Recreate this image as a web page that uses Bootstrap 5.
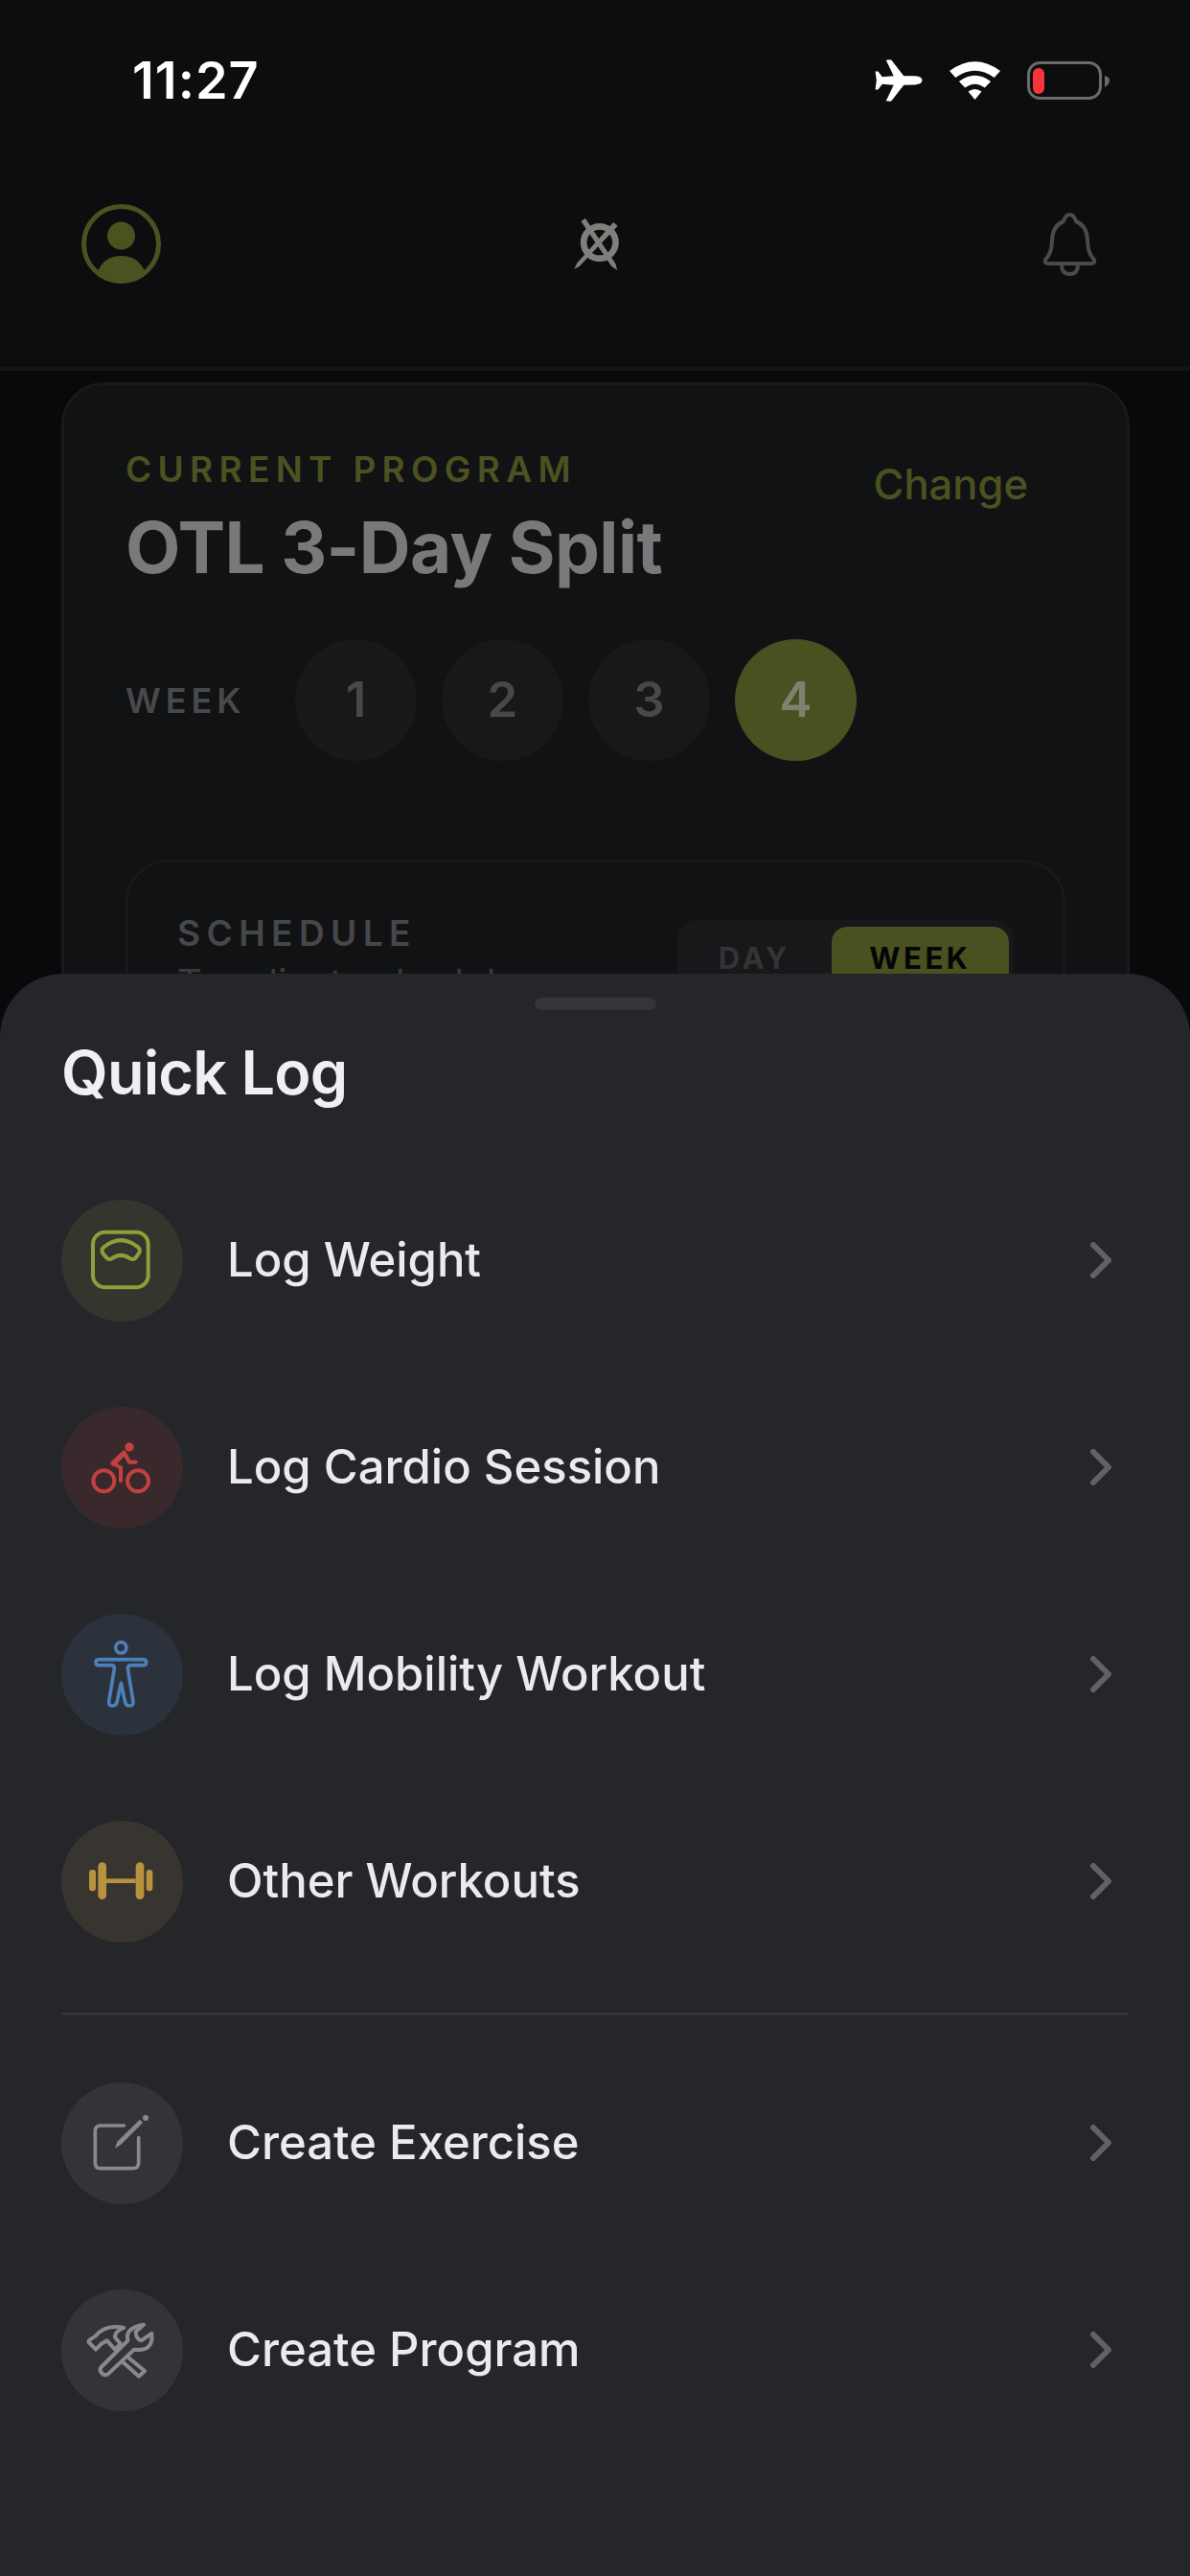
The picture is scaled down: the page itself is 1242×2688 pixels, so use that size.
<!DOCTYPE html>
<html lang="en">
<head>
  <meta charset="UTF-8">
  <meta name="viewport" content="width=device-width, initial-scale=1.0">
  <title>Quick Log</title>
  <link href="https://cdn.jsdelivr.net/npm/bootstrap@5.3.3/dist/css/bootstrap.min.css" rel="stylesheet">
  <style>
    body {
      background: #08090a;
      font-family: Inter, "Liberation Sans", sans-serif;
    }
    .screen {
      width: 1242px;
      height: 2688px;
      overflow: hidden;
      position: relative;
      background: #08090a;
    }
    .top-area { background: #0c0d0f; }
    .status-row { height: 130px; padding: 52px 84px 0 138px; }
    .status-time { font-size: 54px; line-height: 64px; font-weight: 600; color: #fff; letter-spacing: 1px; }
    .status-air { margin: 10px 28px 0 0; }
    .status-wifi { margin: 10px 28px 0 0; }
    .status-batt { margin-top: 10px; }
    .app-head { height: 257px; padding: 83px 99px 0 85px; border-bottom: 4px solid #141517; }
    .head-logo { margin: 14px 0 0 -11px; }
    .head-bell { margin: 9px -2px 0 0; }
    .program-card {
      margin: 12px 63px 0 64px;
      height: 900px;
      padding: 67px 64px 0;
      background: #111214;
      border: 3px solid #18191b;
      border-radius: 44px;
    }
    .over-label { font-size: 37px; line-height: 42px; font-weight: 600; letter-spacing: 6.3px; color: #4b5220; }
    .change-link { font-size: 43.5px; line-height: 54px; font-weight: 500; color: #4b5220; margin: 9px 39px 0 0; }
    .program-name { font-size: 74.5px; line-height: 88px; font-weight: 700; color: #78797b; letter-spacing: -.6px; margin: 16px 0 0; }
    .week-row { margin-top: 52px; }
    .week-label { width: 177px; font-size: 36px; font-weight: 600; letter-spacing: 5px; color: #48494b; }
    .week-dots { gap: 26px; }
    .week-dot {
      width: 127px; height: 127px; border-radius: 50%;
      background: #17181a; color: #47484a;
      font-size: 51px; font-weight: 600;
    }
    .week-dot.on { background: #4a5020; color: #7e8072; }
    .schedule-box {
      margin-top: 103px;
      height: 300px;
      padding: 53px 51px 0;
      border: 3px solid #18191b;
      border-radius: 44px;
    }
    .schedule-title { font-size: 37px; line-height: 42px; font-weight: 600; letter-spacing: 6.4px; color: #464749; }
    .schedule-note { font-size: 40px; line-height: 48px; color: #3a3b3d; margin-top: 7px; white-space: nowrap; }
    .range-toggle { width: 351px; height: 90px; padding: 7px 5px 7px 0; background: #17181a; border-radius: 20px; margin-top: 7px; }
    .range-toggle span { font-size: 31px; font-weight: 700; letter-spacing: 3.6px; line-height: 65px; }
    .range-day { width: 161px; color: #333436; text-align: center; }
    .range-week { width: 185px; color: #050505; background: #4a5020; border-radius: 16px; text-align: center; }

    .sheet {
      position: absolute;
      left: 0; right: 0; top: 1016px; bottom: 0;
      background: #24262a;
      border-radius: 66px 66px 0 0;
      padding: 25px 64px 0;
    }
    .grabber { width: 127px; height: 13px; margin: 0 auto; background: #33353a; border-radius: 7px; }
    .sheet-title { font-size: 63px; line-height: 76px; font-weight: 600; color: #f0f0f2; letter-spacing: -.8px; margin: 27px 0 0; }
    .log-list { margin-top: 94.5px; }
    .log-item { height: 127px; margin-bottom: 89px; gap: 46px; background: transparent; border: 0; padding: 0; }
    .log-circle { width: 127px; height: 127px; border-radius: 50%; flex: none; }
    .log-circle svg { display: block; }
    .log-text { font-size: 49px; font-weight: 500; color: #ebebed; flex-grow: 1; }
    .log-arrow { margin-right: 15px; flex: none; }
    .tint-green { background: #34352d; }
    .tint-red { background: #3a292c; }
    .tint-blue { background: #2b323c; }
    .tint-amber { background: #38342f; }
    .tint-gray { background: #323438; }
    .sheet-rule { height: 3px; background: #323438; margin: -16px 0 70px; }
  </style>
</head>
<body>
  <div class="screen">
    <div class="top-area">
      <div class="status-row d-flex justify-content-between align-items-start">
        <div class="status-time">11:27</div>
        <div class="d-flex align-items-center">
          <svg class="status-air" width="50" height="44" viewBox="100 92 148 133"><path fill="#fff" d="M248 158Q248 146 226 144L190 144L151 94Q148 92 134 94L158 144L122 147L109 130L100 130L104 158L100 187L109 187L122 170L158 173L134 223Q148 225 151 223L190 173L226 172Q248 170 248 158Z"/></svg>
          <svg class="status-wifi" width="53" height="40" viewBox="332 97 160 120"><path fill="#fff" d="M332 127Q412 68 492 127L473 148Q412 104 351 148ZM362 160Q412 122 462 160L443 180Q412 156 381 180ZM391 192Q412 176 433 192L412 217Z"/></svg>
          <svg class="status-batt" width="86" height="40" viewBox="0 0 86 40"><rect x="1.5" y="1.5" width="75" height="37" rx="12" fill="none" stroke="#6a6a6a" stroke-width="3"/><rect x="6" y="7" width="12" height="27" rx="6" fill="#f9353c"/><path d="M81 15Q86 16 86 20Q86 24 81 27Z" fill="#6a6a6a"/></svg>
        </div>
      </div>
      <div class="app-head d-flex justify-content-between align-items-start">
        <svg width="83" height="83" viewBox="0 0 83 83"><defs><clipPath id="ringclip"><circle cx="41.5" cy="41.5" r="40"/></clipPath></defs><circle cx="41.5" cy="41.5" r="39" fill="none" stroke="#4b5220" stroke-width="5"/><circle cx="41.5" cy="33" r="14.5" fill="#4b5220"/><path clip-path="url(#ringclip)" fill="#4b5220" d="M17 70Q24 54 41.5 54Q59 54 66 70L66 90L17 90Z"/></svg>
        <svg class="head-logo" width="47" height="55" viewBox="115 80 140 165"><circle cx="195" cy="158" r="50" fill="none" stroke="#7f807c" stroke-width="20"/><path fill="#7f807c" d="M137 92L150 82L245 225L250 245L232 232ZM238 95L252 106L132 232L115 242L125 222Z"/></svg>
        <svg class="head-bell" width="57" height="66" viewBox="0 0 57 66"><path fill="none" stroke="#4a4a4c" stroke-width="4" stroke-linejoin="round" d="M28.5 2Q33 2 35 9Q46 13 47 28Q47 42 54 49Q55 53 51 53H6Q2 53 3 49Q10 42 10 28Q11 13 22 9Q24 2 28.5 2ZM20 54Q20 64 28.5 64Q37 64 37 54"/></svg>
      </div>
    </div>

    <div class="program-card">
      <div class="d-flex justify-content-between align-items-start">
        <div>
          <div class="over-label">CURRENT PROGRAM</div>
          <h1 class="program-name">OTL 3-Day Split</h1>
        </div>
        <div class="change-link">Change</div>
      </div>
      <div class="week-row d-flex align-items-center">
        <div class="week-label">WEEK</div>
        <div class="week-dots d-flex">
          <div class="week-dot d-flex align-items-center justify-content-center">1</div>
          <div class="week-dot d-flex align-items-center justify-content-center">2</div>
          <div class="week-dot d-flex align-items-center justify-content-center">3</div>
          <div class="week-dot on d-flex align-items-center justify-content-center">4</div>
        </div>
      </div>
      <div class="schedule-box d-flex justify-content-between align-items-start">
        <div>
          <div class="schedule-title">SCHEDULE</div>
          <div class="schedule-note">To adjust schedule</div>
        </div>
        <div class="range-toggle d-flex">
          <span class="range-day">DAY</span>
          <span class="range-week">WEEK</span>
        </div>
      </div>
    </div>

    <div class="sheet">
      <div class="grabber"></div>
      <div class="sheet-title">Quick Log</div>
      <div class="log-list">
        <button class="log-item d-flex align-items-center w-100 text-start">
          <span class="log-circle tint-green"><svg width="127" height="127" viewBox="72 65 381 381"><g fill="none" stroke="#8f9e3a" stroke-width="12"><rect x="171" y="166" width="173" height="173" rx="38"/><path stroke-linejoin="round" d="M205 213Q258 170 312 213Q322 222 314 234L304 247Q298 254 288 249Q258 228 230 249Q220 254 214 247L203 234Q195 222 205 213Z"/></g></svg></span>
          <span class="log-text">Log Weight</span>
          <svg class="log-arrow" width="26" height="38" viewBox="0 0 26 38"><path d="M4 3L20 19L4 35" fill="none" stroke="#606266" stroke-width="6" stroke-linecap="round" stroke-linejoin="round"/></svg>
        </button>
        <button class="log-item d-flex align-items-center w-100 text-start">
          <span class="log-circle tint-red"><svg width="127" height="127" viewBox="72 55 381 381"><g fill="none" stroke="#c2403f" stroke-width="12" stroke-linecap="round" stroke-linejoin="round"><circle cx="205" cy="287" r="33"/><circle cx="312" cy="287" r="33"/><path d="M258 287V245L232 232L268 197L285 228H305"/><path stroke-width="16" d="M236 232L265 203"/></g><circle cx="285" cy="181" r="14" fill="#c2403f"/></svg></span>
          <span class="log-text">Log Cardio Session</span>
          <svg class="log-arrow" width="26" height="38" viewBox="0 0 26 38"><path d="M4 3L20 19L4 35" fill="none" stroke="#606266" stroke-width="6" stroke-linecap="round" stroke-linejoin="round"/></svg>
        </button>
        <button class="log-item d-flex align-items-center w-100 text-start">
          <span class="log-circle tint-blue"><svg width="127" height="127" viewBox="72 45 381 381"><g fill="none" stroke="#4d7fb8" stroke-width="11" stroke-linejoin="round"><circle cx="259" cy="151" r="17"/><path d="M190 188H328Q338 188 338 197Q338 206 328 206H290Q280 206 280 216L297 320Q298 333 285 333Q275 333 272 322L259 262L246 322Q243 333 233 333Q220 333 221 320L238 216Q238 206 228 206H190Q180 206 180 197Q180 188 190 188Z"/></g></svg></span>
          <span class="log-text">Log Mobility Workout</span>
          <svg class="log-arrow" width="26" height="38" viewBox="0 0 26 38"><path d="M4 3L20 19L4 35" fill="none" stroke="#606266" stroke-width="6" stroke-linecap="round" stroke-linejoin="round"/></svg>
        </button>
        <button class="log-item d-flex align-items-center w-100 text-start">
          <span class="log-circle tint-amber"><svg width="127" height="127" viewBox="72 35 381 381"><g fill="#b8923f"><rect x="159" y="188" width="21" height="67" rx="10"/><rect x="187" y="165" width="26" height="116" rx="13"/><rect x="213" y="216" width="92" height="14"/><rect x="305" y="165" width="26" height="116" rx="13"/><rect x="338" y="188" width="20" height="67" rx="10"/></g></svg></span>
          <span class="log-text">Other Workouts</span>
          <svg class="log-arrow" width="26" height="38" viewBox="0 0 26 38"><path d="M4 3L20 19L4 35" fill="none" stroke="#606266" stroke-width="6" stroke-linecap="round" stroke-linejoin="round"/></svg>
        </button>
        <div class="sheet-rule"></div>
        <button class="log-item d-flex align-items-center w-100 text-start">
          <span class="log-circle tint-gray"><svg width="127" height="127" viewBox="72 37 381 381"><path fill="none" stroke="#88898d" stroke-width="11" stroke-linecap="round" d="M268 172H195Q178 172 178 190V288Q178 306 195 306H295Q314 306 314 288V210"/><path fill="#88898d" d="M240 243L247 222L318 153L327 163L258 232Z"/><circle cx="336" cy="148" r="9" fill="#88898d"/></svg></span>
          <span class="log-text">Create Exercise</span>
          <svg class="log-arrow" width="26" height="38" viewBox="0 0 26 38"><path d="M4 3L20 19L4 35" fill="none" stroke="#606266" stroke-width="6" stroke-linecap="round" stroke-linejoin="round"/></svg>
        </button>
        <button class="log-item d-flex align-items-center w-100 text-start">
          <span class="log-circle tint-gray"><svg width="127" height="127" viewBox="72 40 381 381"><g fill="none" stroke="#88898d" stroke-width="12" stroke-linejoin="round" stroke-linecap="round"><path d="M197 283L280 200Q270 160 330 150L305 172Q305 195 322 200L355 178Q362 235 300 228L218 305Q205 312 197 300Q190 292 197 283Z"/><path d="M158 205Q155 200 165 195L180 185Q210 148 268 160Q238 172 240 190L257 210L240 228L215 200L195 212L180 228Z"/><path d="M278 250L333 295L315 312L262 265"/></g><circle cx="245" cy="225" r="5" fill="#88898d"/></svg></span>
          <span class="log-text">Create Program</span>
          <svg class="log-arrow" width="26" height="38" viewBox="0 0 26 38"><path d="M4 3L20 19L4 35" fill="none" stroke="#606266" stroke-width="6" stroke-linecap="round" stroke-linejoin="round"/></svg>
        </button>
      </div>
    </div>
  </div>
  <script src="https://cdn.jsdelivr.net/npm/bootstrap@5.3.3/dist/js/bootstrap.bundle.min.js"></script>
</body>
</html>
